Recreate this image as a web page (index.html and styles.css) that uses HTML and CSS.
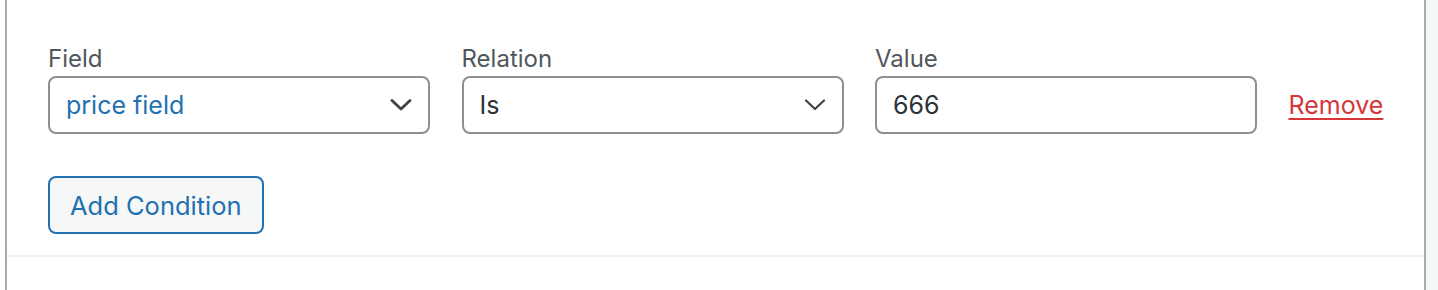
FILE: index.html
```html
<html>

<head>
    <meta charset="UTF-8">
    <meta name="viewport" content="width=device-width, initial-scale=1.0">
    <title>Conditions</title>
    <link rel="stylesheet" href="styles.css">
</head>

<body>
    <div class="page">
        <div class="panel">
            <div class="conditions">
                <div class="condition-row">
                    <div class="field-group">
                        <label class="field-label">Field</label>
                        <div class="select-box">
                            <span class="select-value blue">price field</span>
                            <svg class="chevron bold" viewBox="0 0 22 12" width="22" height="12">
                                <path d="M2 1.5 L11 10 L20 1.5" fill="none" stroke="#3c434a" stroke-width="2.8" stroke-linecap="round" stroke-linejoin="round"/>
                            </svg>
                        </div>
                    </div>
                    <div class="field-group">
                        <label class="field-label">Relation</label>
                        <div class="select-box">
                            <span class="select-value">Is</span>
                            <svg class="chevron" viewBox="0 0 22 12" width="22" height="12">
                                <path d="M2 1.5 L11 10 L20 1.5" fill="none" stroke="#3c434a" stroke-width="2.2" stroke-linecap="round" stroke-linejoin="round"/>
                            </svg>
                        </div>
                    </div>
                    <div class="field-group">
                        <label class="field-label">Value</label>
                        <div class="text-box">666</div>
                    </div>
                    <a class="remove-link" href="#">Remove</a>
                </div>
                <button class="add-btn">Add Condition</button>
            </div>
            <div class="divider"></div>
            <div class="panel-bottom"></div>
        </div>
        <div class="side"></div>
    </div>
</body>

</html>
```

FILE: styles.css
```css
body {
    margin: 0;
    background: #fff;
    font-family: Inter, "Open Sans", Arial, sans-serif;
}

.page {
    display: flex;
    height: 290px;
    padding-left: 5px;
}

.panel {
    width: 1417px;
    border-left: 2px solid #a7aaad;
    border-right: 2px solid #a7aaad;
    display: flex;
    flex-direction: column;
}

.side {
    flex: 1;
    background: #f6f7f7;
}

.conditions {
    padding: 44px 0 0 41px;
    height: 255px;
    box-sizing: border-box;
}

.condition-row {
    display: flex;
    align-items: flex-end;
    gap: 31.5px;
}

.field-group {
    display: flex;
    flex-direction: column;
    width: 382px;
}

.field-label {
    font-size: 24px;
    line-height: 30px;
    color: #50575e;
    margin-bottom: 2px;
}

.select-box,
.text-box {
    box-sizing: border-box;
    height: 58px;
    border: 2px solid #8c8f94;
    border-radius: 8px;
    display: flex;
    align-items: center;
    justify-content: space-between;
    padding: 0 16px 0 16px;
    font-size: 25px;
    color: #2c3338;
}

.select-value.blue {
    color: #2271b1;
}

.chevron {
    display: block;
}

.remove-link {
    font-size: 25px;
    color: #d63638;
    text-decoration: underline;
    text-decoration-thickness: 2px;
    text-underline-offset: 4px;
    line-height: 58px;
}

.add-btn {
    margin-top: 42px;
    height: 58px;
    box-sizing: border-box;
    padding: 0 20px;
    border: 2px solid #2271b1;
    border-radius: 8px;
    background: #f6f7f7;
    color: #2271b1;
    font-family: inherit;
    font-size: 25.5px;
}

.divider {
    height: 2px;
    background: #f0f0f1;
}

.panel-bottom {
    flex: 1;
}
```
